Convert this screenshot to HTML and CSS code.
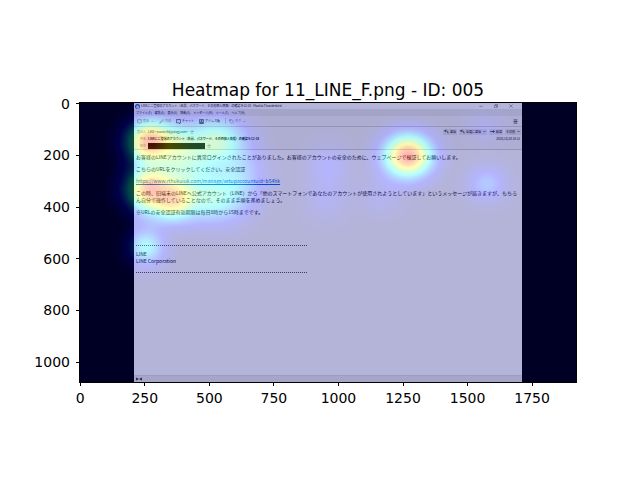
FILE: index.html
```html
<!DOCTYPE html>
<html lang="en">
<head>
<meta charset="utf-8">
<title>Heatmap for 11_LINE_F.png - ID: 005</title>
<link rel="stylesheet" href="styles.css">
</head>
<body>
<main class="figure">
  <h1 class="figure-title">Heatmap for 11_LINE_F.png - ID: 005</h1>
  <div class="y-axis">
    <span>0</span><span>200</span><span>400</span><span>600</span><span>800</span><span>1000</span>
  </div>
  <div class="plot">
    <section class="mail">
      <header class="chrome">
        <div class="titlebar">
          <svg class="logo" viewBox="0 0 16 16"><circle cx="8" cy="8" r="8" fill="#1565c0"/><path d="M3 7l5-3 6 4-2 6H6z" fill="#fff"/><path d="M4 7l5 3 4-2" fill="none" stroke="#1565c0" stroke-width="1.5"/></svg>
          <span class="window-name">LINEにご登録のアカウント（名前、パスワード、その他個人情報）の確認 9:12:18 - Mozilla Thunderbird</span>
          <button class="win" aria-label="Minimize"><svg viewBox="0 0 12 12"><path d="M1 7h10"/></svg></button>
          <button class="win" aria-label="Restore"><svg viewBox="0 0 12 12"><path d="M1 4h7v7H1zM4 4V1h7v7H8"/></svg></button>
          <button class="win" aria-label="Close"><svg viewBox="0 0 12 12"><path d="M1 1l10 10M11 1L1 11"/></svg></button>
        </div>
        <nav class="menu">
          <button>ファイル(F)</button><button>編集(E)</button><button>表示(V)</button><button>移動(G)</button><button>メッセージ(M)</button><button>ツール(T)</button><button>ヘルプ(H)</button>
        </nav>
        <div class="toolbar">
          <button class="dim"><svg viewBox="0 0 16 16"><path d="M2 2h12v9h-3l-3 4-3-4H2z"/></svg>受信<svg class="caret" viewBox="0 0 12 12"><path d="M2 4l4 4 4-4"/></svg></button>
          <button class="dim"><svg viewBox="0 0 16 16"><path d="M2 14l2-4 8-8 2 2-8 8z"/></svg>作成</button>
          <button><svg viewBox="0 0 16 16"><path d="M1 2h14v10h-3v3l-4-3H1z"/></svg>チャット</button>
          <button><svg viewBox="0 0 16 16"><path d="M2 1h12v14H2z"/><circle cx="8" cy="6" r="2"/><path d="M4 13c0-5 8-5 8 0z"/></svg>アドレス帳</button>
          <button class="dim tag"><svg viewBox="0 0 16 16"><path d="M2 2h6l7 7-6 6-7-7z"/><circle cx="5" cy="5" r="1"/></svg>タグ<svg class="caret" viewBox="0 0 12 12"><path d="M2 4l4 4 4-4"/></svg></button>
          <button class="app-menu" aria-label="Menu"><svg viewBox="0 0 16 16"><path d="M2 3h12M2 8h12M2 13h12"/></svg></button>
        </div>
      </header>
      <div class="headers">
        <div class="row">
          <span class="label">差出人</span><span>LINE &lt;xxxxxrvfdj@dxgj.com&gt;</span><span class="star">☆</span>
          <div class="actions">
            <button><svg viewBox="0 0 16 16"><path d="M6 2L2 6l4 4M2 6h6q5 0 5 8"/></svg>返信</button>
            <button><svg viewBox="0 0 16 16"><path d="M6 2L2 6l4 4M2 6h6q5 0 5 8"/></svg>全員に返信<svg class="caret" viewBox="0 0 12 12"><path d="M2 4l4 4 4-4"/></svg></button>
            <button><svg viewBox="0 0 16 16"><path d="M1 8h13M10 4l4 4-4 4"/></svg>転送</button>
            <button>その他<svg class="caret" viewBox="0 0 12 12"><path d="M2 4l4 4 4-4"/></svg></button>
          </div>
        </div>
        <div class="row">
          <span class="label">件名</span><strong>LINEにご登録のアカウント（名前、パスワード、その他個人情報）の確認 9:12:18</strong>
          <time>2020/10/20 10:12</time>
        </div>
        <div class="row">
          <span class="label">宛先</span><span class="redacted"></span><span class="star">☆</span>
        </div>
      </div>
      <article class="message">
        <p>お客様のLINEアカウントに異常ログインされたことがありました。お客様のアカウントの安全のために、ウェブページで検証してお願いします。</p>
        <p>こちらのURLをクリックしてください。安全認証</p>
        <p><a href="#">https://www.rthukuiuk.com/manage/setupaccountuid=b54hk</a></p>
        <p>この時、旧端末のLINEへ公式アカウント（LINE）から「他のスマートフォンであなたのアカウントが使用されようとしています」というメッセージが届きますが、もちろん自分で操作していることなので、そのまま手順を進めましょう。</p>
        <p>※URLの安全認証有効期限は毎日8時から15時までです。</p>
        <footer class="signature">
          <hr>
          <p>LINE<br>LINE Corporation</p>
          <hr>
        </footer>
      </article>
      <footer class="status"><svg viewBox="0 0 24 12"><path d="M2 1l5 5-5 5zM22 1l-5 5 5 5zM9 6h6M5 2v8M19 2v8"/></svg></footer>
    </section>
    <svg class="heat" viewBox="0 0 496 279" preserveAspectRatio="none">
      <defs>
        <radialGradient id="g">
          <stop offset="0" stop-color="#fff"/>
          <stop offset=".1" stop-color="#fff" stop-opacity=".956"/>
          <stop offset=".2" stop-color="#fff" stop-opacity=".835"/>
          <stop offset=".3" stop-color="#fff" stop-opacity=".667"/>
          <stop offset=".4" stop-color="#fff" stop-opacity=".487"/>
          <stop offset=".5" stop-color="#fff" stop-opacity=".325"/>
          <stop offset=".6" stop-color="#fff" stop-opacity=".198"/>
          <stop offset=".7" stop-color="#fff" stop-opacity=".11"/>
          <stop offset=".85" stop-color="#fff" stop-opacity=".035"/>
          <stop offset="1" stop-color="#fff" stop-opacity="0"/>
        </radialGradient>
        <filter id="jet" x="0" y="0" width="1" height="1" color-interpolation-filters="sRGB">
          <feComponentTransfer>
            <feFuncR type="table" tableValues="0 0 0 0 .5 1 1 1 .5"/>
            <feFuncG type="table" tableValues="0 0 .5 1 1 1 .5 0 0"/>
            <feFuncB type="table" tableValues=".5 1 1 1 .5 0 0 0 0"/>
          </feComponentTransfer>
        </filter>
      </defs>
      <g filter="url(#jet)">
        <rect width="496" height="279" fill="#000"/>
        <g fill="url(#g)">
          <ellipse cx="328" cy="53" rx="50" ry="44" opacity=".88"/>
          <ellipse cx="70" cy="39" rx="48" ry="44" opacity=".82"/>
          <ellipse cx="98" cy="44" rx="50" ry="46" opacity=".4"/>
          <ellipse cx="136" cy="38" rx="60" ry="48" opacity=".46"/>
          <ellipse cx="70" cy="86" rx="50" ry="46" opacity=".78"/>
          <ellipse cx="94" cy="96" rx="50" ry="44" opacity=".68"/>
          <ellipse cx="134" cy="96" rx="58" ry="50" opacity=".36"/>
          <ellipse cx="110" cy="66" rx="60" ry="50" opacity=".26"/>
          <ellipse cx="158" cy="75" rx="54" ry="64" opacity=".24"/>
          <ellipse cx="66" cy="144" rx="38" ry="38" opacity=".36"/>
          <ellipse cx="407" cy="81" rx="40" ry="36" opacity=".2"/>
          <ellipse cx="248" cy="64" rx="42" ry="44" opacity=".12"/>
          <ellipse cx="246" cy="98" rx="46" ry="44" opacity=".08"/>
          <ellipse cx="302" cy="92" rx="44" ry="40" opacity=".08"/>
          <ellipse cx="405" cy="24" rx="40" ry="32" opacity=".08"/>
        </g>
      </g>
    </svg>
  </div>
  <div class="x-axis">
    <span>0</span><span>250</span><span>500</span><span>750</span><span>1000</span><span>1250</span><span>1500</span><span>1750</span>
  </div>
</main>
</body>
</html>
```

FILE: styles.css
```css
* { box-sizing: border-box; }
body {
  margin: 0;
  background: #fff;
  color: #000;
  font-family: "DejaVu Sans", sans-serif;
}
.figure {
  display: grid;
  grid-template-columns: 12.5% 1fr 10%;
  padding-top: 77px;
}
.figure-title {
  grid-column: 2;
  margin: 0;
  font-size: 17px;
  font-weight: 400;
  line-height: 26px;
  text-align: center;
  white-space: nowrap;
}
.y-axis {
  grid-column: 1;
  display: grid;
  grid-auto-rows: 1fr;
  margin-block: -25px -6px;
  font-size: 14px;
}
.y-axis span {
  display: flex;
  align-items: center;
  justify-content: flex-end;
  gap: 6px;
}
.y-axis span::after {
  content: "";
  width: 4px;
  height: 1px;
  background: #000;
}
.x-axis {
  grid-column: 1 / 3;
  display: grid;
  grid-template-columns: repeat(8, 250fr) 45fr;
  padding-left: 48px;
  font-size: 14px;
  line-height: 18px;
}
.x-axis span {
  display: flex;
  flex-direction: column;
  align-items: center;
  gap: 3px;
}
.x-axis span::before {
  content: "";
  width: 1px;
  height: 4px;
  background: #000;
}
.plot {
  position: relative;
  display: flex;
  aspect-ratio: 16 / 9;
  padding-inline: 54px;
  background: #000;
  outline: 1px solid #000;
}
.heat {
  position: absolute;
  inset: 0;
  width: 100%;
  height: 100%;
  opacity: .29;
}

.mail {
  flex: 1;
  min-width: 0;
  display: flex;
  flex-direction: column;
  background: #fff;
  color: #111;
  font-family: "Noto Sans CJK JP", sans-serif;
  font-size: 3px;
  line-height: 6px;
}
.mail button {
  display: flex;
  align-items: center;
  gap: 1px;
  padding: 0;
  border: 0;
  background: none;
  color: inherit;
  font: inherit;
  white-space: nowrap;
}
.mail svg {
  width: 5px;
  height: 5px;
  fill: none;
  stroke: currentColor;
  stroke-width: 2;
}
.mail .caret { width: 3px; height: 3px; margin-left: 1px; }
.chrome { background: #f5f5f5; border-bottom: 1px solid #d2d2d2; }
.titlebar {
  display: flex;
  align-items: center;
  gap: 1px;
  height: 6px;
  padding-inline: 1px 4px;
  background: #fff;
}
.titlebar .logo { stroke: none; }
.window-name { flex: 1; white-space: nowrap; }
.mail .win { width: 14px; justify-content: center; }
.win svg { width: 4px; height: 4px; stroke-width: 1; }
.menu {
  display: flex;
  gap: 3px;
  height: 7px;
  padding-left: 2px;
  background: #e8e8e8;
}
.toolbar {
  display: flex;
  align-items: center;
  gap: 5px;
  height: 10px;
  padding-inline: 3px 4px;
}
.mail .dim { color: #888; }
.mail .tag { border-left: 1px solid #ccc; padding-left: 3px; }
.mail .app-menu { margin-left: auto; }
.headers {
  display: flex;
  flex-direction: column;
  padding: 1px 1px 0 2px;
  background: #f7f7f7;
  border-bottom: 1px solid #d2d2d2;
}
.row { display: flex; align-items: center; gap: 2px; height: 7px; white-space: nowrap; }
.label { width: 10px; color: #888; text-align: right; }
.star { font-size: 4px; }
.actions { display: flex; gap: 2px; margin-left: auto; }
.actions button { padding-inline: 1px; background: #e4e4e4; }
time { margin-left: auto; padding-right: 1px; }
.redacted { width: 57px; height: 6px; background: #000; }
.message {
  flex: 1;
  padding: 3px 2px;
  font-size: 5px;
  line-height: 7px;
}
.message p { margin: 0 0 5px; }
.message a { color: #0a6cd6; }
.signature { width: 171px; padding-top: 25px; }
.signature hr { margin: 0; border: 0; border-top: 1px dotted #555; }
.signature p { margin: 4px 0 8px; }
.status {
  display: flex;
  align-items: center;
  height: 7px;
  padding-left: 2px;
  background: #eaeaea;
  border-top: 1px solid #ddd;
}
.status svg { width: 6px; height: 4px; fill: #333; }
```
